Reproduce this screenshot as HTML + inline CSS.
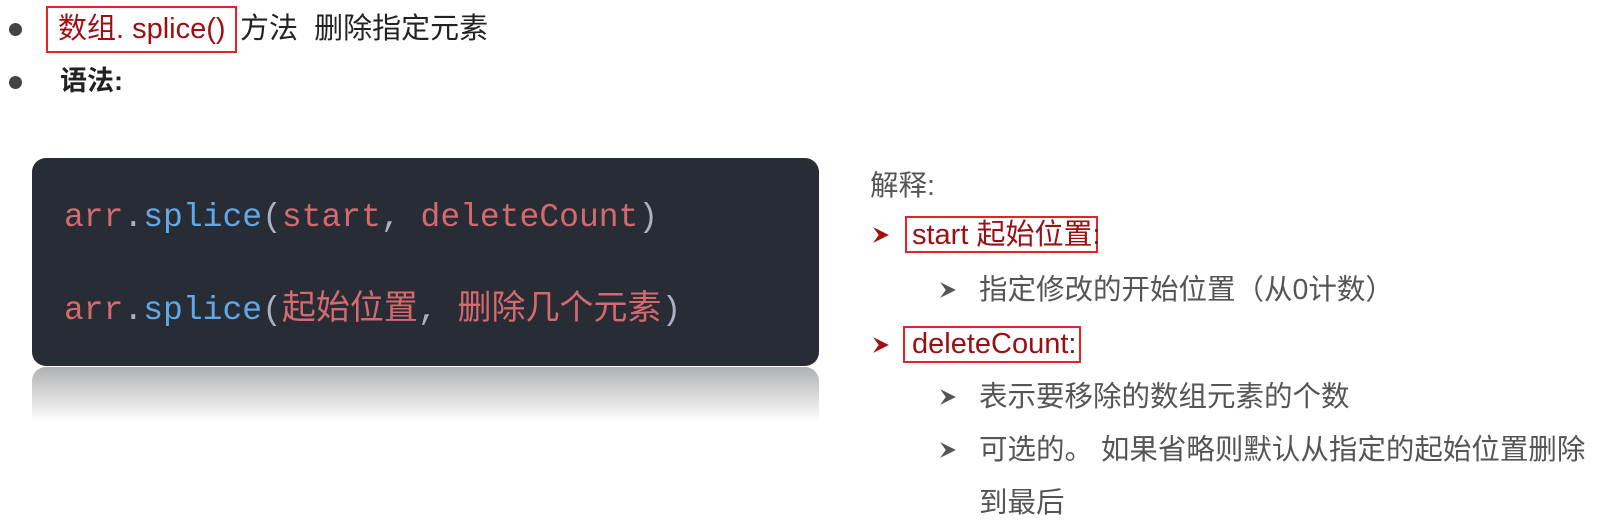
<!DOCTYPE html>
<html><head><meta charset="utf-8"><style>
body{margin:0;width:1610px;height:530px;background:#fff;position:relative;overflow:hidden;font-family:"Liberation Sans","Noto Sans CJK SC",sans-serif}
.a{position:absolute;white-space:nowrap;line-height:1}
.dot{position:absolute;width:13px;height:13px;border-radius:50%;background:#444}
.box{position:absolute;border:2px solid #e8202a;box-sizing:border-box}
.code{position:absolute;left:32px;top:158px;width:787px;height:208px;background:#282c34;border-radius:14px;font-family:"Liberation Mono","Noto Sans CJK SC",monospace;font-size:33px}
.r{color:#d46a6f}.b{color:#62a8e8}.w{color:#abb2bf}
.refl{position:absolute;left:32px;top:367px;width:787px;height:55px;border-radius:14px 14px 0 0;background:linear-gradient(#b0b1b3,#dcdcdc 55%,#fff)}
.g{color:#555;font-size:28.5px}
.dr{color:#9a0f12;font-size:29px}
</style></head><body>
<div class="dot" style="left:9px;top:23px"></div>
<div class="dot" style="left:9px;top:76px"></div>
<div class="box" style="left:46px;top:6px;width:191px;height:47px"></div>
<div class="a" style="left:58px;top:15px;font-size:29px;color:#a00e12">数组. splice()</div>
<div class="a" style="left:240px;top:15px;font-size:29px;color:#222">方法&nbsp; 删除指定元素</div>
<div class="a" style="left:60px;top:68px;font-size:27px;color:#222;font-weight:bold">语法:</div>

<div class="code">
<div class="a" style="left:32px;top:43px"><span class="r">arr</span><span class="w">.</span><span class="b">splice</span><span class="w">(</span><span class="r">start</span><span class="w">, </span><span class="r">deleteCount</span><span class="w">)</span></div>
<div class="a" style="left:32px;top:136px"><span class="r">arr</span><span class="w">.</span><span class="b">splice</span><span class="w">(</span><span class="r" style="font-size:34px">起始位置</span><span class="w">, </span><span class="r" style="font-size:34px">删除几个元素</span><span class="w">)</span></div>
</div>
<div class="refl"></div>

<div class="a g" style="left:870px;top:172px">解释:</div>
<svg class="a" style="left:872px;top:226px" width="18" height="18" viewBox="0 0 16 16"><path d="M1 1 L15 8 L1 15 L6 8Z" fill="#a01015"/></svg>
<div class="box" style="left:905px;top:216px;width:193px;height:37px"></div>
<div class="a dr" style="left:912px;top:221px">start 起始位置<span style="color:#333">:</span></div>
<svg class="a" style="left:939px;top:281px" width="18" height="18" viewBox="0 0 16 16"><path d="M1 1 L15 8 L1 15 L6 8Z" fill="#555"/></svg>
<div class="a g" style="left:979px;top:276px">指定修改的开始位置（从0计数）</div>
<svg class="a" style="left:872px;top:336px" width="18" height="18" viewBox="0 0 16 16"><path d="M1 1 L15 8 L1 15 L6 8Z" fill="#a01015"/></svg>
<div class="box" style="left:903px;top:326px;width:178px;height:37px"></div>
<div class="a dr" style="left:912px;top:330px">deleteCount<span style="color:#333">:</span></div>
<svg class="a" style="left:939px;top:388px" width="18" height="18" viewBox="0 0 16 16"><path d="M1 1 L15 8 L1 15 L6 8Z" fill="#555"/></svg>
<div class="a g" style="left:979px;top:383px">表示要移除的数组元素的个数</div>
<svg class="a" style="left:939px;top:441px" width="18" height="18" viewBox="0 0 16 16"><path d="M1 1 L15 8 L1 15 L6 8Z" fill="#555"/></svg>
<div class="a g" style="left:979px;top:436px">可选的。 如果省略则默认从指定的起始位置删除</div>
<div class="a g" style="left:979px;top:489px">到最后</div>
</body></html>
